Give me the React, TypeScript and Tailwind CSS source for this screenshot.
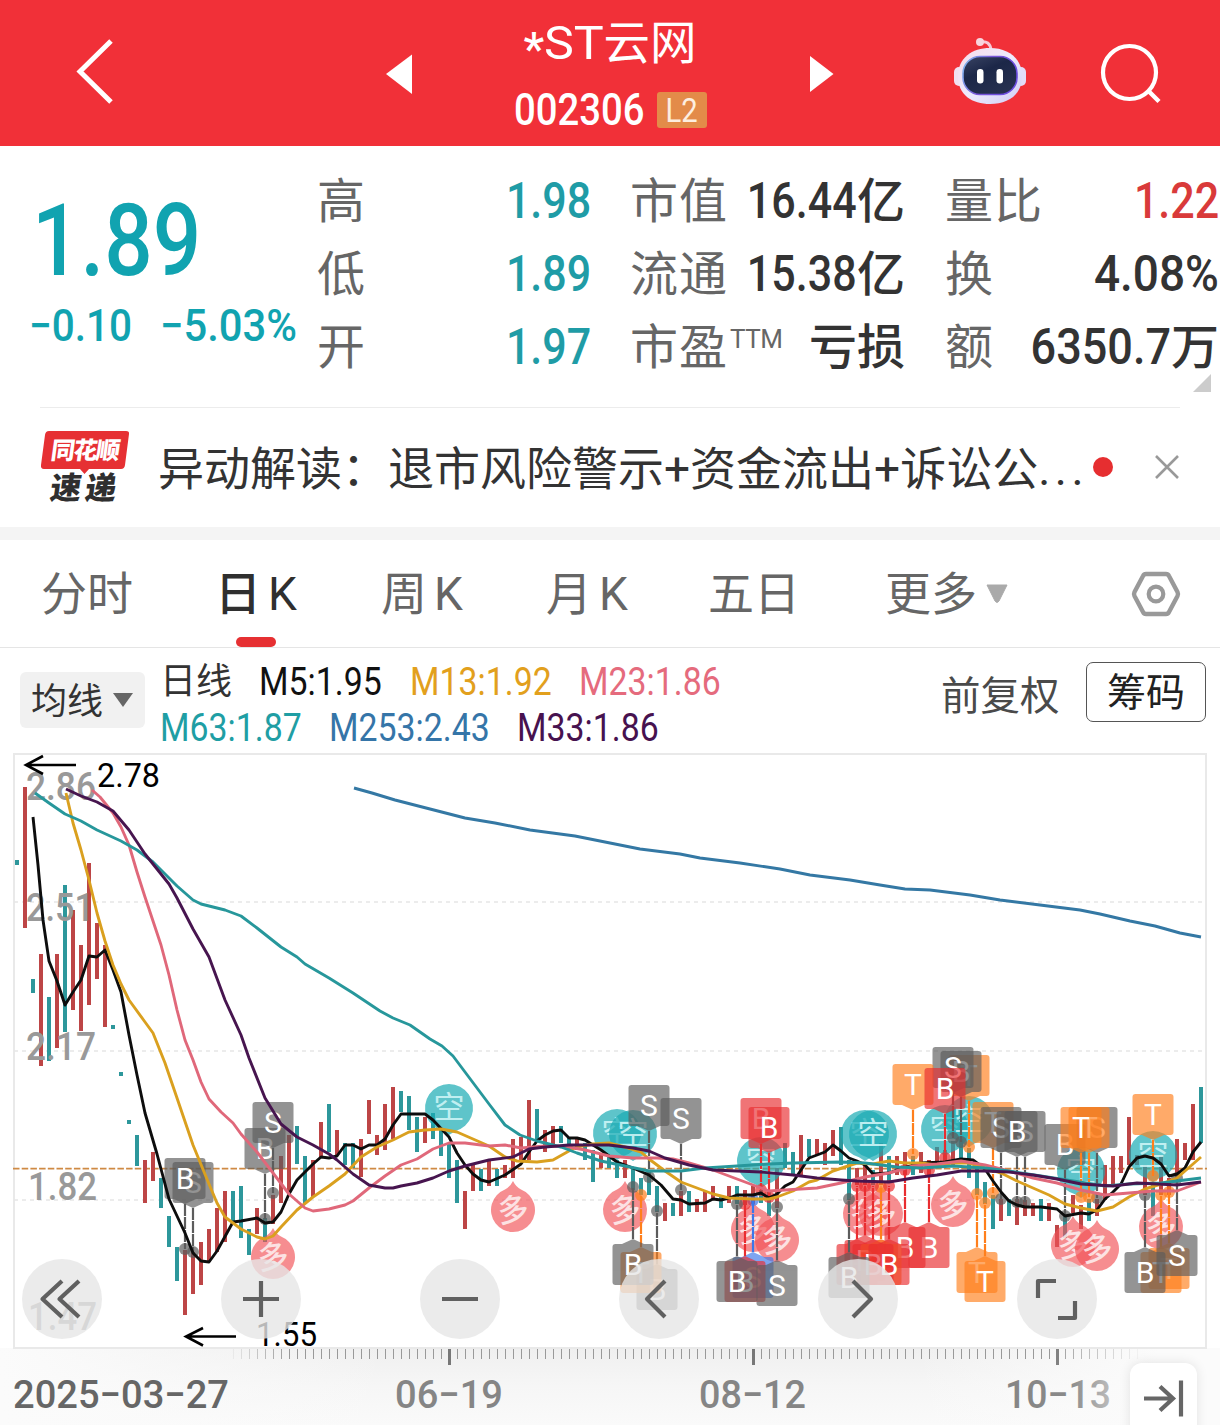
import React from "react";

type Pt = [number, number];

/* Candles: x, top, bottom, 1 = red / 0 = teal */
const candles: [number, number, number, 0 | 1][] = [
  [17, 860, 865, 0], [25, 787, 928, 1], [33, 979, 993, 0], [41, 954, 1066, 1], [49, 997, 1061, 0], [57, 954, 1048, 1],
  [65, 885, 1032, 0], [73, 910, 1010, 1], [81, 945, 1031, 1], [89, 863, 1005, 1], [97, 923, 979, 1], [105, 945, 1027, 1],
  [113, 1025, 1029, 0], [121, 1072, 1076, 0], [129, 1120, 1124, 0], [137, 1135, 1166, 0], [145, 1160, 1203, 1],
  [153, 1152, 1181, 1], [161, 1178, 1208, 0], [169, 1216, 1247, 0], [177, 1247, 1281, 0], [185, 1250, 1315, 1],
  [193, 1252, 1294, 1], [201, 1242, 1285, 1], [209, 1229, 1262, 1], [217, 1208, 1252, 1], [225, 1191, 1242, 1],
  [233, 1191, 1222, 0], [241, 1186, 1238, 0], [249, 1229, 1255, 0], [257, 1208, 1234, 1], [265, 1218, 1242, 0],
  [273, 1195, 1224, 1], [281, 1156, 1203, 1], [289, 1135, 1192, 1], [297, 1126, 1164, 0], [305, 1156, 1203, 0],
  [313, 1160, 1197, 1], [321, 1122, 1158, 1], [329, 1104, 1152, 0], [337, 1130, 1155, 1], [345, 1143, 1165, 0],
  [353, 1143, 1168, 0], [361, 1139, 1177, 1], [369, 1100, 1134, 1], [377, 1135, 1155, 1], [385, 1104, 1150, 1],
  [393, 1087, 1139, 1], [401, 1091, 1112, 0], [409, 1096, 1130, 0], [417, 1117, 1152, 0], [425, 1117, 1143, 1],
  [433, 1113, 1139, 0], [441, 1128, 1156, 0], [449, 1143, 1178, 0], [457, 1160, 1203, 0], [465, 1191, 1229, 1],
  [473, 1165, 1191, 1], [481, 1169, 1191, 0], [489, 1161, 1186, 1], [497, 1169, 1186, 0], [505, 1165, 1178, 1],
  [513, 1139, 1178, 1], [521, 1137, 1161, 1], [529, 1100, 1160, 1], [537, 1109, 1141, 0], [545, 1130, 1152, 1],
  [553, 1126, 1144, 1], [561, 1126, 1143, 0], [569, 1138, 1150, 0], [577, 1138, 1150, 1], [585, 1143, 1160, 0],
  [593, 1150, 1182, 0], [601, 1153, 1168, 1], [609, 1157, 1168, 0], [617, 1160, 1178, 0], [625, 1160, 1178, 1],
  [633, 1168, 1190, 0], [641, 1178, 1195, 0], [649, 1170, 1195, 0], [657, 1186, 1212, 0], [665, 1203, 1221, 1],
  [673, 1203, 1216, 0], [681, 1191, 1216, 1], [689, 1191, 1212, 0], [697, 1199, 1212, 1], [705, 1191, 1212, 1],
  [713, 1186, 1199, 1], [721, 1196, 1208, 0], [729, 1186, 1203, 1], [737, 1186, 1204, 0], [745, 1190, 1205, 1],
  [753, 1186, 1204, 1], [761, 1190, 1203, 0], [769, 1192, 1216, 0], [777, 1168, 1208, 1], [785, 1143, 1168, 0],
  [793, 1152, 1175, 0], [801, 1135, 1175, 1], [809, 1139, 1157, 0], [817, 1139, 1155, 1], [825, 1143, 1165, 1],
  [833, 1130, 1156, 1], [841, 1127, 1165, 0], [849, 1160, 1200, 0], [857, 1168, 1185, 1], [865, 1165, 1185, 1],
  [873, 1170, 1185, 0], [881, 1143, 1185, 1], [889, 1156, 1182, 0], [897, 1156, 1175, 1], [905, 1152, 1175, 1],
  [913, 1156, 1175, 0], [921, 1152, 1173, 1], [929, 1160, 1175, 1], [937, 1147, 1168, 1], [945, 1150, 1165, 1],
  [953, 1139, 1165, 1], [961, 1139, 1160, 0], [969, 1148, 1178, 0], [977, 1165, 1195, 0], [985, 1182, 1204, 0],
  [993, 1195, 1229, 0], [1001, 1199, 1221, 1], [1009, 1199, 1216, 0], [1017, 1199, 1225, 1], [1025, 1200, 1216, 1],
  [1033, 1203, 1216, 1], [1041, 1199, 1221, 0], [1049, 1203, 1221, 1], [1057, 1225, 1247, 1], [1065, 1216, 1238, 0],
  [1073, 1195, 1213, 1], [1081, 1205, 1229, 1], [1089, 1199, 1221, 0], [1097, 1199, 1216, 1], [1105, 1165, 1200, 1],
  [1113, 1156, 1186, 1], [1121, 1156, 1173, 1], [1129, 1117, 1165, 1], [1137, 1155, 1165, 1], [1145, 1165, 1195, 1],
  [1153, 1185, 1216, 0], [1161, 1156, 1195, 1], [1169, 1178, 1195, 1], [1177, 1139, 1178, 1], [1185, 1143, 1160, 1],
  [1193, 1104, 1160, 1], [1201, 1087, 1143, 0],
];

const averages: { color: string; points: string }[] = [
  { color: "#3478a4", points: "354,788 372,793 395,800 430,809 465,818 495,823 530,830 575,836 600,841 640,849 680,854 700,858 740,863 780,869 810,875 850,880 880,885 905,889 930,890 970,895 1000,900 1040,905 1080,910 1100,914 1130,921 1155,926 1180,933 1201,937" },
  { color: "#0d0d0d", points: "33,817 38,865 43,920 49,961 57,981 65,1005 73,992 81,980 89,956 97,957 105,950 113,970 121,992 129,1035 137,1075 145,1113 157,1154 169,1199 185,1233 193,1253 201,1261 209,1262 217,1251 233,1222 241,1221 257,1218 265,1223 273,1222 281,1212 289,1194 297,1180 313,1164 321,1157 329,1158 337,1156 345,1145 353,1145 361,1149 369,1145 377,1145 385,1139 393,1125 401,1114 425,1114 433,1120 449,1137 457,1153 465,1165 473,1174 481,1180 489,1182 505,1175 521,1164 529,1152 537,1141 545,1135 553,1131 561,1130 569,1138 577,1138 585,1140 601,1150 617,1162 633,1168 649,1175 661,1185 673,1199 681,1200 689,1204 705,1203 713,1199 721,1200 729,1198 737,1195 753,1195 761,1193 769,1198 777,1194 785,1186 793,1182 801,1170 809,1158 825,1152 833,1145 841,1151 849,1158 857,1161 865,1165 873,1174 889,1173 897,1170 921,1163 945,1162 961,1159 973,1160 985,1169 993,1181 1001,1192 1009,1201 1017,1205 1025,1207 1041,1207 1057,1209 1065,1216 1081,1213 1089,1214 1097,1210 1105,1199 1113,1192 1121,1184 1129,1167 1137,1158 1145,1156 1153,1158 1161,1164 1169,1176 1177,1174 1185,1168 1193,1152 1201,1142" },
  { color: "#daa01f", points: "66,793 73,823 81,850 89,880 97,913 105,941 113,965 121,984 129,1000 145,1022 153,1033 165,1063 177,1098 193,1145 209,1184 217,1203 225,1217 241,1229 257,1237 265,1239 273,1236 281,1227 297,1210 313,1197 329,1186 345,1174 361,1157 377,1147 393,1140 409,1132 425,1130 441,1129 457,1132 473,1139 489,1146 505,1157 517,1161 537,1162 553,1160 569,1151 577,1147 593,1144 609,1143 625,1147 641,1152 649,1159 665,1171 681,1182 697,1188 713,1194 729,1198 753,1199 769,1199 777,1197 793,1191 809,1182 817,1180 833,1171 857,1163 873,1164 889,1161 905,1163 921,1163 937,1165 953,1163 969,1163 985,1168 1001,1173 1017,1181 1033,1188 1049,1195 1065,1204 1081,1208 1097,1211 1113,1207 1129,1197 1145,1189 1161,1184 1177,1178 1185,1171 1201,1157" },
  { color: "#e0687a", points: "92,790 100,797 113,813 121,827 129,845 137,872 145,897 161,945 169,975 177,1010 185,1040 193,1060 201,1082 209,1099 221,1112 233,1123 241,1134 257,1152 273,1173 289,1194 305,1208 313,1211 329,1209 345,1205 353,1201 369,1188 385,1176 401,1165 417,1159 433,1149 449,1143 465,1143 489,1146 505,1145 521,1148 545,1146 569,1147 585,1150 609,1156 633,1158 657,1158 673,1159 689,1163 713,1170 737,1179 753,1185 769,1191 785,1190 801,1189 817,1188 841,1183 865,1177 889,1173 913,1166 937,1164 961,1161 985,1165 1009,1171 1033,1178 1057,1183 1081,1190 1105,1195 1129,1193 1153,1191 1177,1191 1201,1182" },
  { color: "#27979b", points: "35,793 49,803 65,814 81,821 97,830 121,841 137,850 153,862 169,878 177,886 193,900 201,904 225,910 241,916 257,928 281,947 297,957 305,964 329,978 353,993 380,1011 393,1018 410,1025 430,1039 442,1046 453,1056 465,1072 489,1104 505,1125 520,1135 537,1141 561,1147 577,1153 601,1161 625,1166 649,1171 681,1171 705,1168 737,1166 769,1164 793,1163 841,1162 865,1163 897,1167 921,1168 953,1166 985,1168 1009,1171 1041,1176 1073,1181 1105,1186 1129,1184 1161,1183 1177,1181 1201,1178" },
  { color: "#47154f", points: "66,789 81,796 97,802 113,811 129,830 145,854 157,869 169,884 177,898 193,929 209,957 225,1000 241,1035 249,1058 265,1098 281,1124 297,1137 313,1145 329,1154 337,1160 353,1174 369,1185 385,1188 393,1188 401,1186 417,1183 433,1178 449,1171 465,1166 489,1160 513,1157 529,1149 545,1147 569,1145 609,1145 633,1148 649,1151 665,1158 689,1165 713,1170 761,1172 793,1175 817,1178 841,1180 857,1181 889,1182 913,1178 937,1175 961,1171 985,1171 1009,1172 1033,1175 1057,1179 1081,1184 1113,1186 1137,1183 1177,1185 1201,1182" },
];

const GREY = "#5c5c5c";
const RED = "#e92d30";
const ORANGE = "#ff7f1c";
const BLUE = "#3b78ea";

/* Trade flags: centre x, top of the square, y of the anchor dot, letter, colour */
const flags: [number, number, number, string, string][] = [
  [193, 1162, 1252, "S", GREY], [185, 1158, 1249, "B", GREY],
  [265, 1128, 1219, "B", GREY], [273, 1102, 1193, "S", GREY],
  [649, 1085, 1177, "S", GREY], [681, 1098, 1190, "S", GREY],
  [761, 1098, 1190, "B", RED], [769, 1107, 1197, "B", RED],
  [969, 1055, 1147, "T", ORANGE], [961, 1051, 1142, "B", GREY], [953, 1047, 1138, "S", GREY],
  [913, 1064, 1154, "T", ORANGE], [945, 1068, 1158, "B", RED],
  [993, 1102, 1193, "T", ORANGE], [1001, 1107, 1199, "S", GREY], [1025, 1111, 1202, "S", GREY], [1017, 1111, 1202, "B", GREY],
  [1065, 1124, 1216, "B", GREY], [1097, 1107, 1198, "S", GREY], [1089, 1107, 1197, "T", ORANGE], [1081, 1107, 1197, "T", ORANGE],
  [1153, 1094, 1176, "T", ORANGE],
  [657, 1269, 1211, "B", GREY], [641, 1252, 1195, "T", ORANGE], [633, 1244, 1187, "B", GREY],
  [753, 1257, 1200, "S", BLUE], [745, 1261, 1204, "B", RED], [737, 1261, 1204, "B", GREY], [777, 1265, 1207, "S", GREY],
  [929, 1227, 1170, "B", RED], [905, 1227, 1170, "B", RED],
  [857, 1244, 1186, "B", RED], [865, 1240, 1186, "B", RED], [881, 1244, 1187, "T", ORANGE], [873, 1244, 1186, "B", RED],
  [889, 1244, 1186, "B", RED], [849, 1257, 1199, "B", GREY],
  [977, 1252, 1194, "T", ORANGE], [985, 1261, 1203, "T", ORANGE],
  [1169, 1248, 1192, "T", ORANGE], [1161, 1252, 1195, "T", ORANGE], [1145, 1252, 1195, "B", GREY], [1177, 1235, 1178, "S", GREY],
];

const shortDrops: Pt[] = [
  [449, 1108], [617, 1133], [633, 1134], [761, 1161], [865, 1134], [873, 1134], [945, 1129], [969, 1120], [1081, 1171], [1153, 1155],
];
const longDrops: Pt[] = [
  [273, 1257], [513, 1210], [625, 1210], [753, 1230], [777, 1240], [865, 1214], [881, 1214], [953, 1205], [1073, 1245], [1097, 1249], [1161, 1227],
];

function Flag({ x, top, node, letter, color }: { x: number; top: number; node: number; letter: string; color: string }) {
  const down = node > top;
  const edge = down ? top + 41 : top;
  const tip = down ? edge + 5 : edge - 5;
  return (
    <g>
      <line x1={x} x2={x} y1={tip} y2={node} stroke={color} strokeWidth="2.2" strokeDasharray="12 1" />
      <circle cx={x} cy={node} r="6" fill={color} opacity="0.7" />
      <g opacity="0.66" fill={color}>
        <rect x={x - 20.5} y={top} width="41" height="41" rx="3" />
        <path d={`M${x - 11} ${edge}L${x} ${tip}L${x + 11} ${edge}Z`} />
      </g>
      <text x={x} y={top + 31} fontSize="30" textAnchor="middle" fill="#fff">{letter}</text>
    </g>
  );
}

function Chart() {
  const ticks = Array.from({ length: 114 }, (_, i) => 233 + i * 8);
  return (
    <svg width="1220" height="672" viewBox="0 753 1220 672" className="block">
      <defs>
        <linearGradient id="strip" x1="0" x2="0" y1="0" y2="1">
          <stop offset="0" stopColor="#efefef" />
          <stop offset="0.5" stopColor="#f6f6f6" />
          <stop offset="1" stopColor="#fafafa" />
        </linearGradient>
        <linearGradient id="sides" x1="0" x2="1" y1="0" y2="0">
          <stop offset="0" stopColor="#fbfbfb" />
          <stop offset="0.32" stopColor="#fbfbfb" stopOpacity="0" />
          <stop offset="0.75" stopColor="#fbfbfb" stopOpacity="0" />
          <stop offset="0.95" stopColor="#fbfbfb" />
        </linearGradient>
        <linearGradient id="dateFade" gradientUnits="userSpaceOnUse" x1="1005" x2="1112" y1="0" y2="0">
          <stop offset="0" stopColor="#858585" />
          <stop offset="0.6" stopColor="#8a8a8a" />
          <stop offset="1" stopColor="#bdbdbd" />
        </linearGradient>
      </defs>
      <rect x="0" y="1348" width="1220" height="77" fill="url(#strip)" />
      <rect x="0" y="1348" width="1220" height="77" fill="url(#sides)" />
      <rect x="14" y="754" width="1192" height="594" fill="#fff" stroke="#e9e9e9" strokeWidth="2" />
      {[902, 1051, 1200].map((y) => (
        <line key={y} x1="14" x2="1206" y1={y} y2={y} stroke="#e6e6e6" strokeWidth="1.6" strokeDasharray="4 4" />
      ))}
      <line x1="13" x2="1207" y1="1168.7" y2="1168.7" stroke="#cf8a44" strokeWidth="1.8" strokeDasharray="6.5 2.2" />
      {candles.map(([x, a, b, up]) => (
        <rect key={x} x={x - 2} y={a} width="4" height={b - a} fill={up ? "#bd4546" : "#2d979b"} />
      ))}
      <g fill="#999" fontSize="38.5" fontWeight="500">
        <text x="26" y="799.5" textLength="70" lengthAdjust="spacingAndGlyphs">2.86</text>
        <text x="26" y="920.5" textLength="68" lengthAdjust="spacingAndGlyphs">2.51</text>
        <text x="26" y="1060" textLength="70" lengthAdjust="spacingAndGlyphs">2.17</text>
        <text x="28" y="1200" textLength="69" lengthAdjust="spacingAndGlyphs">1.82</text>
        <text x="28" y="1330" textLength="69" lengthAdjust="spacingAndGlyphs">1.47</text>
      </g>
      {longDrops.map(([x, y], i) => (
        <g key={i}>
          <path d={`M${x} ${y - 29}Q${x + 3} ${y - 23} ${x + 8} ${y - 20.5}A22 22 0 1 1 ${x - 8} ${y - 20.5}Q${x - 3} ${y - 23} ${x} ${y - 29}Z`} fill="#f15256" opacity="0.66" />
          <text x={x} y={y + 11} fontSize="31" fontWeight="500" textAnchor="middle" fill="#fff" opacity="0.75" transform={`rotate(-8 ${x} ${y})`}>多</text>
        </g>
      ))}
      {shortDrops.map(([x, y], i) => (
        <g key={i}>
          <path d={`M${x} ${y + 27}L${x + 6} ${y + 23.2}A24 24 0 1 0 ${x - 6} ${y + 23.2}Z`} fill="#1aabb3" opacity="0.7" />
          <text x={x} y={y + 10} fontSize="31" textAnchor="middle" fill="#d2f7f8" opacity="0.85">空</text>
        </g>
      ))}
      {flags.map(([x, top, node, letter, color]) => (
        <Flag key={`${x}-${top}`} x={x} top={top} node={node} letter={letter} color={color} />
      ))}
      {averages.map((line) => (
        <polyline key={line.color} points={line.points} fill="none" stroke={line.color} strokeWidth="2.9" strokeLinejoin="round" />
      ))}
      <g stroke="#000" strokeWidth="2.6" fill="none">
        <path d="M76 765H26M43 756L26 765L43 774" />
        <path d="M236 1336.500H186M203 1328L186 1336.500L203 1345.500" />
      </g>
      <g fill="#000" fontSize="34">
        <text x="97" y="787" textLength="63" lengthAdjust="spacingAndGlyphs">2.78</text>
        <text x="256" y="1346" textLength="61" lengthAdjust="spacingAndGlyphs">1.55</text>
      </g>
      {ticks.map((x, i) => {
        const major = x === 449 || x === 753 || x === 1057;
        const fade = Math.min(1, (i + 1) / 8, (114 - i) / 12);
        return (
          <line key={x} x1={x + 0.5} x2={x + 0.5} y1="1349" y2={major ? 1365 : 1359} stroke={major ? "#777" : "#999"} strokeWidth={major ? 3 : 1} opacity={fade} />
        );
      })}
      <g fontSize="39.500" fontWeight="500">
        <text x="13" y="1408" fill="#666" textLength="216" lengthAdjust="spacingAndGlyphs">2025−03−27</text>
        <text x="395" y="1408" fill="#858585" textLength="108" lengthAdjust="spacingAndGlyphs">06−19</text>
        <text x="699" y="1408" fill="#858585" textLength="107" lengthAdjust="spacingAndGlyphs">08−12</text>
        <text x="1005" y="1408" fill="url(#dateFade)" textLength="106" lengthAdjust="spacingAndGlyphs">10−13</text>
      </g>
    </svg>
  );
}

const controls = [
  "M40 22L20.500 40L40 58M57 22L37.500 40L57 58",
  "M22 40H58M40 22V58",
  "M22 40H58",
  "M46 22L28 40L46 58",
  "M35 22L53 40L35 58",
  "M21 39V22H39M58 42V59H41",
];

function Stat({ label, sup, value, unit, color, fit = "scale-x-[.86]" }: { label: string; sup?: string; value: string; unit?: string; color: string; fit?: string }) {
  return (
    <div className="flex h-[73px] items-center justify-between leading-[73px]">
      <div className="flex pt-[3px] text-[48px] tracking-[1px] text-[#666]">
        <span className="-ml-px">{label}</span>
        {sup && <span className="-mt-[8px] ml-[2px] text-[26px] tracking-[-.5px]">{sup}</span>}
      </div>
      <div className={`flex pt-[3px] font-medium ${color}`}>
        {value && <span className={`origin-right text-[50px] ${fit}`}>{value}</span>}
        {unit && <span className="text-[48px]">{unit}</span>}
      </div>
    </div>
  );
}

function Legend({ text, className }: { text: string; className: string }) {
  return (
    <div className={className}>
      <span className="block w-max origin-left scale-x-[.89]">{text}</span>
    </div>
  );
}

export default function App() {
  return (
    <div className="h-[1425px] w-[1220px] overflow-hidden bg-white font-['Roboto','Noto_Sans_CJK_SC',sans-serif] text-[#333]">
      <header className="flex h-[146px] bg-[#f13038] text-white">
        <svg width="510" height="146" viewBox="0 0 510 146" className="shrink-0">
          <path d="M111 41L80 71.500L111 102" fill="none" stroke="#fff" strokeWidth="5" />
          <path d="M386 74L412 54.500V94Z" fill="#fff" />
        </svg>
        <div className="flex w-[200px] shrink-0 flex-col items-center pt-[14px]">
          <div className="flex h-[58px] items-center text-[46.5px] leading-[58px]">
            <span className="flex w-[80px] items-center">
              <span className="mt-[12px] w-[20px] font-medium">*</span>
              <span className="origin-left scale-x-[1.08]">ST</span>
            </span>
            <span>云网</span>
          </div>
          <div className="mt-[10px] flex h-[56px] w-full items-center pl-[4px]">
            <span className="w-[143px] origin-left scale-x-[.87] text-[44px] font-medium leading-[56px]">002306</span>
            <span className="flex h-[36px] w-[50px] items-center justify-center rounded-[3px] bg-[#e38b49] text-[34px] leading-[36px] text-[#fdeee0]">
              <span className="scale-x-[.86]">L2</span>
            </span>
          </div>
        </div>
        <svg width="510" height="146" viewBox="710 0 510 146" className="shrink-0">
          <defs>
            <linearGradient id="head" x1="0" x2="1" y1="0" y2="1">
              <stop offset="0" stopColor="#f6dcea" />
              <stop offset="0.5" stopColor="#eeeafc" />
              <stop offset="1" stopColor="#cfcdf5" />
            </linearGradient>
            <linearGradient id="visor" x1="0" x2="0.6" y1="0" y2="1">
              <stop offset="0" stopColor="#3a4464" />
              <stop offset="0.45" stopColor="#1c2748" />
              <stop offset="1" stopColor="#26304f" />
            </linearGradient>
            <linearGradient id="rim" x1="0" x2="1" y1="0" y2="0.3">
              <stop offset="0" stopColor="#7fc0f0" />
              <stop offset="0.5" stopColor="#7a55d8" />
              <stop offset="1" stopColor="#6a4ce0" />
            </linearGradient>
          </defs>
          <path d="M810 56L833.500 74L810 92Z" fill="#fff" />
          <path d="M980 42Q990 40 991 50" fill="none" stroke="#f7c9d6" strokeWidth="3" />
          <circle cx="980" cy="42" r="4" fill="#f8d5de" />
          <rect x="954" y="67" width="10" height="19" rx="5" fill="#f1dff0" />
          <rect x="1016" y="67" width="10" height="19" rx="5" fill="#e3dcf8" />
          <path d="M990 48C1008 48 1022 58 1022 76C1022 95 1008 104 990 104C972 104 958 95 958 76C958 58 972 48 990 48Z" fill="url(#head)" />
          <rect x="963" y="56.500" width="54" height="38" rx="17" fill="url(#visor)" stroke="url(#rim)" strokeWidth="1.600" />
          <rect x="977" y="69" width="6.500" height="14.500" rx="3.200" fill="#fff" />
          <rect x="996.500" y="69" width="6.500" height="14.500" rx="3.200" fill="#fff" />
          <circle cx="1129.500" cy="72.500" r="26.500" fill="none" stroke="#fff" strokeWidth="4.200" />
          <path d="M1148.500 91L1159 101.500" stroke="#fff" strokeWidth="4.400" />
        </svg>
      </header>

      <section className="relative flex h-[261px] pt-[17px]">
        <div className="w-[318px] shrink-0 font-medium text-[#11a3b0]">
          <div className="mt-[20px] h-[116px] pl-[32px] text-[101px] leading-[116px]">
            <span className="block w-max origin-left scale-x-[.845]">1.89</span>
          </div>
          <div className="-mt-px flex h-[57px] pl-[29px] text-[45px] leading-[56px]">
            <span className="w-[131px] origin-left scale-x-[.9]">−0.10</span>
            <span className="origin-left scale-x-[.928]">−5.03%</span>
          </div>
        </div>
        <div className="w-[273px] shrink-0">
          <Stat label="高" value="1.98" color="text-[#1f9ca6]" />
          <Stat label="低" value="1.89" color="text-[#1f9ca6]" />
          <Stat label="开" value="1.97" color="text-[#1f9ca6]" />
        </div>
        <div className="ml-[40px] w-[274px] shrink-0">
          <Stat label="市值" value="16.44" unit="亿" color="text-[#333]" />
          <Stat label="流通" value="15.38" unit="亿" color="text-[#333]" />
          <Stat label="市盈" sup="TTM" value="" unit="亏损" color="text-[#333]" />
        </div>
        <div className="ml-[41px] w-[273px] shrink-0">
          <Stat label="量比" value="1.22" color="text-[#d93a3a]" />
          <Stat label="换" value="4.08%" color="text-[#333]" fit="scale-x-[.92]" />
          <Stat label="额" value="6350.7" unit="万" color="text-[#333]" fit="scale-x-[.9]" />
        </div>
        <svg width="18" height="18" viewBox="0 0 18 18" className="absolute bottom-[15px] right-[9px]">
          <path d="M18 0V18H0Z" fill="#ccc" />
        </svg>
      </section>

      <section className="mx-[40px] flex h-[120px] items-center border-t border-[#ececec]">
        <svg width="118" height="80" viewBox="40 428 118 80" className="shrink-0">
          <path d="M49 431H126Q129.500 431 129 434L125 465Q124.500 469 121 469H89L84.500 474L80 469H44Q40.500 469 41 465L45 435Q45.500 431 49 431Z" fill="#e63033" />
          <text x="50" y="459" fontSize="24" fontWeight="900" fill="#fff" transform="skewX(-8)" style={{ transformOrigin: "50px 459px" }} textLength="69">同花顺</text>
          <text x="49" y="499.5" fontSize="31" fontWeight="900" fill="#2f2f2f" transform="skewX(-8)" style={{ transformOrigin: "49px 499px" }} textLength="66">速递</text>
        </svg>
        <span className="mt-[3px] flex w-[934px] shrink-0 whitespace-nowrap text-[46px] leading-[60px]">
          <span>异动解读：退市风险警示+资金流出+诉讼公<span className="tracking-[4.500px]">...</span></span>
        </span>
        <span className="-mt-[2px] ml-px h-5 w-5 shrink-0 rounded-full bg-[#e62e30]" />
        <svg width="26" height="26" viewBox="0 0 26 26" className="-mt-[2px] ml-[41px] shrink-0">
          <path d="M2 2L24 24M24 2L2 24" stroke="#999" strokeWidth="2.600" />
        </svg>
      </section>

      <nav className="flex h-[121px] border-b border-t-[13px] border-b-[#e5e5e5] border-t-[#f4f4f4] text-[46px] leading-[109px] text-[#666]">
        <div className="w-[215px] shrink-0 pl-[41px]">分时</div>
        <div className="relative flex w-[124px] shrink-0 gap-[7px] text-[#2f2f2f]">
          <span className="font-medium">日</span><span>K</span>
          <span className="absolute bottom-0 left-[21px] h-[10px] w-[40px] rounded-full bg-[#e63032]" />
        </div>
        <div className="flex w-[165px] shrink-0 gap-[7px] pl-[42px]"><span>周</span><span>K</span></div>
        <div className="flex w-[204px] shrink-0 gap-[7px] pl-[42px]"><span>月</span><span>K</span></div>
        <div className="w-[177px] shrink-0">五日</div>
        <div className="flex w-[246px] shrink-0 items-center">
          <span className="mt-px">更多</span>
          <svg width="22" height="20" viewBox="0 0 22 20" className="ml-[9px]"><path d="M1 1H21L13 17Q11 20 9 17Z" fill="#aaa" stroke="#aaa" strokeLinejoin="round" /></svg>
        </div>
        <svg width="50" height="48" viewBox="0 0 50 48" className="mt-[30px] shrink-0">
          <path d="M15 4H35Q37 4 38 6L46.500 22Q47.500 24 46.500 26L38 42Q37 44 35 44H15Q13 44 12 42L3.500 26Q2.500 24 3.500 22L12 6Q13 4 15 4Z" fill="none" stroke="#999" strokeWidth="4.400" />
          <circle cx="25" cy="24" r="7.300" fill="none" stroke="#999" strokeWidth="4.200" />
        </svg>
      </nav>

      <section className="flex h-[105px] pl-[20px]">
        <div className="mt-[24px] flex h-[56px] w-[125px] shrink-0 items-center justify-between rounded-[6px] bg-[#f1f1f1] pl-[11px] pr-[12px] text-[36px] leading-[56px]">
          <span className="mt-[3px]">均线</span>
          <svg width="20" height="14" viewBox="0 0 20 14"><path d="M0 0H20L10 14Z" fill="#666" /></svg>
        </div>
        <div className="ml-[15px] w-[781px] shrink-0 pt-[11px] text-[38px] leading-[46px]">
          <div className="flex h-[46px]">
            <div className="w-[99px] text-[36px] text-[#333]">日线</div>
            <Legend text="M5:1.95" className="w-[151px] text-[#111]" />
            <Legend text="M13:1.92" className="w-[169px] text-[#e2a01d]" />
            <Legend text="M23:1.86" className="text-[#e56b7d]" />
          </div>
          <div className="flex h-[46px]">
            <Legend text="M63:1.87" className="w-[169px] text-[#1f9ea4]" />
            <Legend text="M253:2.43" className="w-[188px] text-[#3575a8]" />
            <Legend text="M33:1.86" className="text-[#47124f]" />
          </div>
        </div>
        <div className="w-[145px] shrink-0 pt-[19px] text-[39.5px] leading-[60px] text-[#4a4a4a]">前复权</div>
        <div className="mt-[14px] h-[60px] w-[120px] shrink-0 rounded-[7px] border border-[#555] text-center text-[39px] leading-[60px] text-[#222]">筹码</div>
      </section>

      <section className="relative">
        <Chart />
        <div className="absolute left-[22px] top-[506px] flex gap-[119px]">
          {controls.map((d) => (
            <button key={d} className="h-[80px] w-[80px] rounded-full bg-[#e6e6e6]/80">
              <svg width="80" height="80" viewBox="0 0 80 80">
                <path d={d} fill="none" stroke="#606060" strokeWidth="4.200" strokeLinejoin="round" />
              </svg>
            </button>
          ))}
        </div>
        <button className="absolute right-[23px] top-[610px] h-[80px] w-[67px] rounded-[12px] bg-white shadow-[0_0_12px_rgba(0,0,0,0.1)]">
          <svg width="67" height="80" viewBox="0 0 67 80">
            <path d="M14 35.500H43M30 23.500L43 35.500L30 47.500" fill="none" stroke="#666" strokeWidth="4.200" />
            <path d="M51 17.500V53.500" stroke="#666" strokeWidth="4.200" />
          </svg>
        </button>
      </section>
    </div>
  );
}
